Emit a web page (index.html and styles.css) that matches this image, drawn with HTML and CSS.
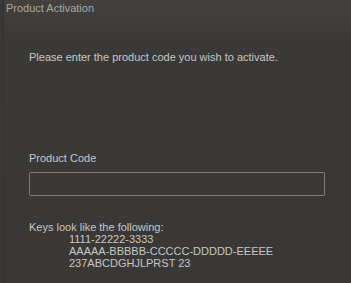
FILE: index.html
```html
<!DOCTYPE html>
<html>
<head>
<meta charset="utf-8">
<link rel="stylesheet" href="styles.css">
</head>
<body>
<div class="panel">
  <div class="title">Product Activation</div>
  <div class="content">
    <p class="intro">Please enter the product code you wish to activate.</p>
    <label class="label">Product Code</label>
    <div class="input"></div>
    <div class="keys">
      <div>Keys look like the following:</div>
      <div class="examples">
        <div>1111-22222-3333</div>
        <div>AAAAA-BBBBB-CCCCC-DDDDD-EEEEE</div>
        <div>237ABCDGHJLPRST 23</div>
      </div>
    </div>
  </div>
</div>
</body>
</html>
```
FILE: styles.css
```css
html, body {
  margin: 0;
  padding: 0;
  width: 351px;
  height: 283px;
  overflow: hidden;
  background: #3a3836;
}
.panel {
  height: 283px;
  background: linear-gradient(#43403e 0px, #3b3937 40px, #3a3836 100%);
  font-family: "Liberation Sans", Arial, sans-serif;
  font-size: 11px;
  color: #c6c6c6;
  border-left: 3px solid #3a3836;
  box-shadow: inset 1px 0 0 #343230;
  box-sizing: border-box;
}
.title {
  padding: 2px 0 0 3px;
  line-height: 13px;
  color: #a9a7a5;
}
.content {
  padding: 0 26px 0 26px;
}
.intro {
  margin: 36px 0 0 0;
  line-height: 13px;
}
.label {
  display: block;
  margin-top: 88px;
  line-height: 13px;
}
.input {
  margin-top: 7px;
  height: 22px;
  border: 1px solid #7c7a78;
  border-radius: 2px;
}
.keys {
  margin-top: 25px;
  line-height: 12px;
}
.examples {
  padding-left: 40px;
}
```
